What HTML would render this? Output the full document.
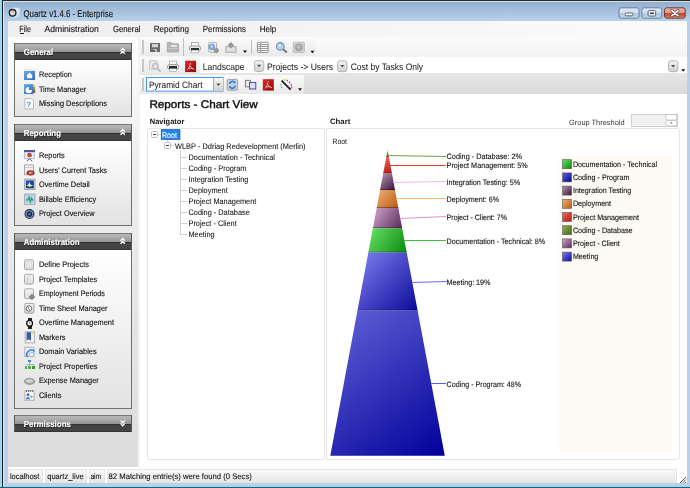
<!DOCTYPE html><html><head><meta charset="utf-8"><style>html,body{margin:0;padding:0;background:#fff;overflow:hidden}svg{display:block;will-change:transform}text{font-family:"Liberation Sans",sans-serif;text-rendering:geometricPrecision}</style></head><body>
<svg width="690" height="488" viewBox="0 0 690 488" shape-rendering="crispEdges">
<defs>
<linearGradient id="gTitle" x1="0" y1="0" x2="0" y2="1"><stop offset="0" stop-color="#93b0d0"/><stop offset="1" stop-color="#b9d2ea"/></linearGradient>
<linearGradient id="gSide" x1="0" y1="0" x2="0" y2="1"><stop offset="0" stop-color="#fdfdfd"/><stop offset="0.25" stop-color="#f0f0f0"/><stop offset="1" stop-color="#dcdcdc"/></linearGradient>
<linearGradient id="gBody" x1="0" y1="0" x2="0" y2="1"><stop offset="0" stop-color="#ffffff"/><stop offset="1" stop-color="#e2e2e2"/></linearGradient>
<linearGradient id="gHdrTop" x1="0" y1="0" x2="0" y2="1"><stop offset="0" stop-color="#b8b8b8"/><stop offset="0.35" stop-color="#b2b2b2"/><stop offset="1" stop-color="#949494"/></linearGradient>
<linearGradient id="gTS" x1="0" y1="0" x2="0" y2="1"><stop offset="0" stop-color="#fafafa"/><stop offset="1" stop-color="#e9e9e9"/></linearGradient>
<linearGradient id="gStat" x1="0" y1="0" x2="0" y2="1"><stop offset="0" stop-color="#fbfbfb"/><stop offset="1" stop-color="#e6e6e6"/></linearGradient>
<linearGradient id="gBtn" x1="0" y1="0" x2="0" y2="1"><stop offset="0" stop-color="#f4f4f4"/><stop offset="1" stop-color="#d0d0d0"/></linearGradient>
</defs>
<rect x="0" y="0" width="690" height="488" fill="#b9d1ea" />
<rect x="0" y="0" width="2" height="488" fill="#99d9f5" />
<rect x="2" y="0" width="1" height="488" fill="#1b1b1b" />
<rect x="2" y="0" width="688" height="1" fill="#2b2b26" />
<rect x="3" y="1" width="687" height="1" fill="#d6e0ea" />
<rect x="3" y="2" width="687" height="19" fill="url(#gTitle)" />
<rect x="3" y="2" width="1" height="486" fill="#dbe7f3" />
<rect x="0" y="487" width="690" height="1" fill="#0e6b75" />
<rect x="3" y="486" width="687" height="1" fill="#9fd5ee" />
<defs><linearGradient id="gDoc" x1="0" y1="0" x2="1" y2="1"><stop offset="0" stop-color="#ffffff"/><stop offset="1" stop-color="#b8cce6"/></linearGradient></defs>
<path d="M12 7.8 h6.4 l1.8 1.8 v8.6 h-8.2z" fill="url(#gDoc)" stroke="#a8bcd8" stroke-width="0.5" shape-rendering="geometricPrecision"/>
<circle cx="12.6" cy="12.8" r="3.3" fill="#dcdcdc" stroke="#1e1e1e" stroke-width="1.3" shape-rendering="geometricPrecision"/>
<path d="M12.6 12.8 L13.6 11.2" stroke="#777" stroke-width="0.7" shape-rendering="geometricPrecision"/>
<text x="23.5" y="17.1" font-size="9.8" fill="#141414" stroke="#141414" stroke-width="0.12" textLength="89.5" lengthAdjust="spacingAndGlyphs" >Quartz v1.4.6 - Enterprise</text>
<defs>
<linearGradient id="gCapB" x1="0" y1="0" x2="0" y2="1"><stop offset="0" stop-color="#dce8f4"/><stop offset="0.45" stop-color="#cfdff0"/><stop offset="0.5" stop-color="#b2c9e2"/><stop offset="0.85" stop-color="#b8cfe6"/><stop offset="1" stop-color="#d4e4f2"/></linearGradient>
<linearGradient id="gCapR" x1="0" y1="0" x2="0" y2="1"><stop offset="0" stop-color="#eab4a6"/><stop offset="0.45" stop-color="#e29c8a"/><stop offset="0.5" stop-color="#c8482c"/><stop offset="0.8" stop-color="#cc5a40"/><stop offset="1" stop-color="#e8a08c"/></linearGradient>
</defs>
<rect x="619.0" y="7.8" width="20.100000000000023" height="10.4" rx="2.2" fill="url(#gCapB)" stroke="#6d7d94" stroke-width="1" shape-rendering="geometricPrecision"/>
<rect x="625.15" y="13" width="7.8" height="2.8" rx="1.2" fill="#fff" stroke="#4a5468" stroke-width="0.9" shape-rendering="geometricPrecision"/>
<rect x="641.9" y="7.8" width="20.0" height="10.4" rx="2.2" fill="url(#gCapB)" stroke="#6d7d94" stroke-width="1" shape-rendering="geometricPrecision"/>
<rect x="648.1" y="10.6" width="7.6" height="5.4" rx="1" fill="#fff" stroke="#4a5468" stroke-width="0.9" shape-rendering="geometricPrecision"/>
<rect x="649.6999999999999" y="12.4" width="4.4" height="1.8" fill="#3a5078" shape-rendering="geometricPrecision"/>
<rect x="664.6" y="7.8" width="20.600000000000023" height="10.4" rx="2.2" fill="url(#gCapR)" stroke="#6a3a3a" stroke-width="1" shape-rendering="geometricPrecision"/>
<path d="M671.8000000000001 10.7 L678.0000000000001 15.7 M678.0000000000001 10.7 L671.8000000000001 15.7" stroke="#4a4a50" stroke-width="3" stroke-linecap="round" shape-rendering="geometricPrecision"/>
<path d="M671.8000000000001 10.7 L678.0000000000001 15.7 M678.0000000000001 10.7 L671.8000000000001 15.7" stroke="#fff" stroke-width="1.6" stroke-linecap="round" shape-rendering="geometricPrecision"/>
<rect x="8" y="21" width="679" height="462" fill="#ffffff" />
<defs><linearGradient id="gMenu" x1="0" y1="0" x2="1" y2="0"><stop offset="0" stop-color="#efefef"/><stop offset="1" stop-color="#fbfbfb"/></linearGradient></defs>
<rect x="8" y="21" width="679" height="16" fill="url(#gMenu)" />
<text x="19.3" y="32.2" font-size="8.9" fill="#141414" stroke="#141414" stroke-width="0.12" textLength="11.6" lengthAdjust="spacingAndGlyphs" >File</text>
<text x="44.5" y="32.2" font-size="8.9" fill="#141414" stroke="#141414" stroke-width="0.12" textLength="54.4" lengthAdjust="spacingAndGlyphs" >Administration</text>
<text x="112.9" y="32.2" font-size="8.9" fill="#141414" stroke="#141414" stroke-width="0.12" textLength="27.6" lengthAdjust="spacingAndGlyphs" >General</text>
<text x="153.7" y="32.2" font-size="8.9" fill="#141414" stroke="#141414" stroke-width="0.12" textLength="35.3" lengthAdjust="spacingAndGlyphs" >Reporting</text>
<text x="202.8" y="32.2" font-size="8.9" fill="#141414" stroke="#141414" stroke-width="0.12" textLength="43.2" lengthAdjust="spacingAndGlyphs" >Permissions</text>
<text x="259.8" y="32.2" font-size="8.9" fill="#141414" stroke="#141414" stroke-width="0.12" textLength="16.5" lengthAdjust="spacingAndGlyphs" >Help</text>
<rect x="19.5" y="33" width="4" height="1" fill="#1a1a1a" />
<rect x="8" y="37" width="130" height="430" fill="url(#gSide)" />
<rect x="138" y="37" width="2" height="430" fill="#f4f4f4" />
<defs>
<linearGradient id="icBlue" x1="0" y1="0" x2="1" y2="1"><stop offset="0" stop-color="#6aa8e6"/><stop offset="1" stop-color="#2d6cc0"/></linearGradient>
<linearGradient id="icGray" x1="0" y1="0" x2="0" y2="1"><stop offset="0" stop-color="#f4f4f4"/><stop offset="1" stop-color="#dadada"/></linearGradient>
<linearGradient id="icNavy" x1="0" y1="0" x2="1" y2="1"><stop offset="0" stop-color="#2a64b8"/><stop offset="1" stop-color="#0a2a6a"/></linearGradient>
<linearGradient id="icRed" x1="0" y1="0" x2="1" y2="1"><stop offset="0" stop-color="#e02a2a"/><stop offset="1" stop-color="#8c0606"/></linearGradient>
</defs>
<rect x="14" y="43" width="118" height="8.6" fill="url(#gHdrTop)" />
<rect x="14" y="51.6" width="118" height="8.8" fill="#444444" />
<rect x="14" y="51.5" width="118" height="1" fill="#303030" />
<rect x="14" y="59.4" width="118" height="1" fill="#343434" />
<rect x="14" y="43" width="118" height="1" fill="#787878" />
<rect x="14" y="43" width="1" height="17.4" fill="#5a5a5a" />
<rect x="131" y="43" width="1" height="17.4" fill="#5a5a5a" />
<text x="24.4" y="55.8" font-size="8.5" font-weight="bold" fill="#000000" textLength="29.4" lengthAdjust="spacingAndGlyphs" opacity="0.55">General</text>
<text x="23.8" y="55.2" font-size="8.5" font-weight="bold" fill="#ffffff" stroke="#ffffff" stroke-width="0.15" textLength="29.4" lengthAdjust="spacingAndGlyphs" >General</text>
<path d="M120.5 50.699999999999996 L122.7 48.4 L124.9 50.699999999999996 M120.5 53.699999999999996 L122.7 51.4 L124.9 53.699999999999996" stroke="#fff" stroke-width="1.3" fill="none" shape-rendering="geometricPrecision"/>
<rect x="14" y="60.4" width="118" height="56.6" fill="url(#gBody)" />
<rect x="14" y="60.4" width="1" height="56.6" fill="#707070" />
<rect x="131" y="60.4" width="1" height="56.6" fill="#707070" />
<rect x="14" y="116.0" width="118" height="1" fill="#707070" />
<text x="38.9" y="77.2" font-size="8.0" fill="#111" stroke="#111" stroke-width="0.12" textLength="33" lengthAdjust="spacingAndGlyphs" >Reception</text>
<rect x="24.5" y="69.60000000000001" width="10" height="2" fill="#eef1f5" stroke="#d8dde5" stroke-width="0.5" shape-rendering="geometricPrecision"/>
<rect x="24" y="71.00000000000001" width="11" height="9" fill="url(#icBlue)" shape-rendering="geometricPrecision"/>
<path d="M27 78.2 v-3.2 l2.6 -2.4 l2.6 2.4 v3.2 z" fill="#fff" shape-rendering="geometricPrecision"/>
<text x="38.9" y="91.72" font-size="8.0" fill="#111" stroke="#111" stroke-width="0.12" textLength="47.3" lengthAdjust="spacingAndGlyphs" >Time Manager</text>
<rect x="24" y="84.12" width="9.3" height="10" fill="url(#icBlue)" shape-rendering="geometricPrecision"/>
<path d="M28.8 90.12 L28.8 86.92 A3.2 3.2 0 1 0 32 90.12z" fill="#fff" shape-rendering="geometricPrecision"/>
<rect x="33.3" y="84.52000000000001" width="1.7" height="2.8" fill="#e8d040" />
<rect x="33.3" y="87.32000000000001" width="1.7" height="2.8" fill="#74b048" />
<rect x="33.3" y="90.12" width="1.7" height="2.6" fill="#e02828" />
<text x="38.9" y="106.24" font-size="8.0" fill="#111" stroke="#111" stroke-width="0.12" textLength="68" lengthAdjust="spacingAndGlyphs" >Missing Descriptions</text>
<path d="M24.9 98.54000000000002 h6.5 l2 2 v8.3 h-8.5z" fill="#fff" stroke="#b0b0b0" stroke-width="0.9" shape-rendering="geometricPrecision"/>
<text x="26.6" y="106.94000000000001" font-size="7.5" font-weight="bold" fill="#3d7fd0">?</text>
<rect x="14" y="124" width="118" height="8.6" fill="url(#gHdrTop)" />
<rect x="14" y="132.6" width="118" height="8.8" fill="#444444" />
<rect x="14" y="132.5" width="118" height="1" fill="#303030" />
<rect x="14" y="140.4" width="118" height="1" fill="#343434" />
<rect x="14" y="124" width="118" height="1" fill="#787878" />
<rect x="14" y="124" width="1" height="17.4" fill="#5a5a5a" />
<rect x="131" y="124" width="1" height="17.4" fill="#5a5a5a" />
<text x="24.4" y="136.8" font-size="8.5" font-weight="bold" fill="#000000" textLength="37.2" lengthAdjust="spacingAndGlyphs" opacity="0.55">Reporting</text>
<text x="23.8" y="136.2" font-size="8.5" font-weight="bold" fill="#ffffff" stroke="#ffffff" stroke-width="0.15" textLength="37.2" lengthAdjust="spacingAndGlyphs" >Reporting</text>
<path d="M120.5 131.70000000000002 L122.7 129.4 L124.9 131.70000000000002 M120.5 134.70000000000002 L122.7 132.4 L124.9 134.70000000000002" stroke="#fff" stroke-width="1.3" fill="none" shape-rendering="geometricPrecision"/>
<rect x="14" y="141.4" width="118" height="84.6" fill="url(#gBody)" />
<rect x="14" y="141.4" width="1" height="84.6" fill="#707070" />
<rect x="131" y="141.4" width="1" height="84.6" fill="#707070" />
<rect x="14" y="225.0" width="118" height="1" fill="#707070" />
<text x="38.9" y="158.0" font-size="8.0" fill="#111" stroke="#111" stroke-width="0.12" textLength="25.84" lengthAdjust="spacingAndGlyphs" >Reports</text>
<rect x="24.6" y="152.0" width="9.6" height="6.6" fill="#ececec" stroke="#a8a8a8" stroke-width="0.7" shape-rendering="geometricPrecision"/>
<rect x="24" y="149.9" width="11" height="2.2" fill="#4a58a8" />
<circle cx="29.5" cy="155.0" r="2.3" fill="#e03838" shape-rendering="geometricPrecision"/>
<path d="M29.5 155.0 h2.3 a2.3 2.3 0 0 1 -1 1.9z" fill="#3a9a40" shape-rendering="geometricPrecision"/>
<path d="M27 161.20000000000002 L29.5 158.70000000000002 L32 161.20000000000002" stroke="#3848b8" stroke-width="1" fill="none" shape-rendering="geometricPrecision"/>
<text x="38.9" y="172.52" font-size="8.0" fill="#111" stroke="#111" stroke-width="0.12" textLength="68.12" lengthAdjust="spacingAndGlyphs" >Users' Current Tasks</text>
<rect x="24.5" y="164.92000000000002" width="9" height="9.8" fill="#f2f2f2" stroke="#a0a0a0" stroke-width="0.9" shape-rendering="geometricPrecision"/>
<rect x="25" y="166.92000000000002" width="8" height="0.7" fill="#c8c8c8" />
<rect x="26.6" y="167.52" width="0.7" height="6.5" fill="#c8c8c8" />
<ellipse cx="30.6" cy="172.82000000000002" rx="4.1" ry="2.6" fill="#c82020" shape-rendering="geometricPrecision"/>
<ellipse cx="30.8" cy="172.82000000000002" rx="2.3" ry="1.4" fill="#50a0d0" shape-rendering="geometricPrecision"/>
<ellipse cx="30" cy="173.02" rx="1" ry="0.9" fill="#e0c030" shape-rendering="geometricPrecision"/>
<text x="38.9" y="187.04" font-size="8.0" fill="#111" stroke="#111" stroke-width="0.12" textLength="50.85" lengthAdjust="spacingAndGlyphs" >Overtime Detail</text>
<rect x="24.7" y="179.14" width="10.3" height="10.3" fill="#e6e9ee" stroke="#9a9a9a" stroke-width="0.9" shape-rendering="geometricPrecision"/>
<rect x="25.8" y="180.34" width="8" height="8" fill="url(#icNavy)" shape-rendering="geometricPrecision"/>
<path d="M26.2 185.84 C27.8 185.64 28.6 184.44 29.4 182.04 C30 184.44 31 185.44 33.2 185.44 L31.8 186.44 C30.5 186.44 30 185.94 29.6 187.24 C29 186.24 28 186.64 26.2 185.84z" fill="#f0f0b0" shape-rendering="geometricPrecision"/>
<text x="38.9" y="201.56" font-size="8.0" fill="#111" stroke="#111" stroke-width="0.12" textLength="57.29" lengthAdjust="spacingAndGlyphs" >Billable Efficiency</text>
<rect x="24.7" y="194.06" width="10.3" height="10.3" fill="#dde4ec" stroke="#9a9a9a" stroke-width="0.9" shape-rendering="geometricPrecision"/>
<rect x="25.8" y="195.16" width="8" height="8" fill="#a8d0f4" shape-rendering="geometricPrecision"/>
<path d="M25.8 199.96 L28 199.96 L29.2 196.96 L30.4 201.96 L31.6 198.46 L32.4 199.96 L33.8 199.96" stroke="#18a050" stroke-width="1.1" fill="none" shape-rendering="geometricPrecision"/>
<text x="38.9" y="216.08" font-size="8.0" fill="#111" stroke="#111" stroke-width="0.12" textLength="55.77" lengthAdjust="spacingAndGlyphs" >Project Overview</text>
<circle cx="29.5" cy="214.07999999999998" r="5" fill="#1e2a50" shape-rendering="geometricPrecision"/>
<circle cx="29.5" cy="214.07999999999998" r="3.4" fill="none" stroke="#8a98c8" stroke-width="1.1" shape-rendering="geometricPrecision"/>
<circle cx="29.5" cy="214.07999999999998" r="1.4" fill="#5a6aa0" shape-rendering="geometricPrecision"/>
<rect x="14" y="233" width="118" height="8.6" fill="url(#gHdrTop)" />
<rect x="14" y="241.6" width="118" height="8.8" fill="#444444" />
<rect x="14" y="241.5" width="118" height="1" fill="#303030" />
<rect x="14" y="249.4" width="118" height="1" fill="#343434" />
<rect x="14" y="233" width="118" height="1" fill="#787878" />
<rect x="14" y="233" width="1" height="17.4" fill="#5a5a5a" />
<rect x="131" y="233" width="1" height="17.4" fill="#5a5a5a" />
<text x="24.4" y="245.8" font-size="8.5" font-weight="bold" fill="#000000" textLength="55.74" lengthAdjust="spacingAndGlyphs" opacity="0.55">Administration</text>
<text x="23.8" y="245.2" font-size="8.5" font-weight="bold" fill="#ffffff" stroke="#ffffff" stroke-width="0.15" textLength="55.74" lengthAdjust="spacingAndGlyphs" >Administration</text>
<path d="M120.5 240.70000000000002 L122.7 238.4 L124.9 240.70000000000002 M120.5 243.70000000000002 L122.7 241.4 L124.9 243.70000000000002" stroke="#fff" stroke-width="1.3" fill="none" shape-rendering="geometricPrecision"/>
<rect x="14" y="250.4" width="118" height="158.6" fill="url(#gBody)" />
<rect x="14" y="250.4" width="1" height="158.6" fill="#707070" />
<rect x="131" y="250.4" width="1" height="158.6" fill="#707070" />
<rect x="14" y="408.0" width="118" height="1" fill="#707070" />
<text x="38.9" y="267.2" font-size="8.0" fill="#111" stroke="#111" stroke-width="0.12" textLength="50" lengthAdjust="spacingAndGlyphs" >Define Projects</text>
<rect x="24.5" y="259.79999999999995" width="9" height="9.8" rx="1.6" fill="url(#icGray)" stroke="#a9a9a9" stroke-width="1" shape-rendering="geometricPrecision"/>
<rect x="26.5" y="261.59999999999997" width="5" height="6" fill="#e9e9e9" stroke="#d0d0d0" stroke-width="0.5" shape-rendering="geometricPrecision"/>
<text x="38.9" y="281.72" font-size="8.0" fill="#111" stroke="#111" stroke-width="0.12" textLength="58.4" lengthAdjust="spacingAndGlyphs" >Project Templates</text>
<rect x="24.5" y="274.31999999999994" width="9" height="9.8" rx="1.6" fill="url(#icGray)" stroke="#a9a9a9" stroke-width="1" shape-rendering="geometricPrecision"/>
<path d="M27.5 282.61999999999995 v-6 h3 M27.5 279.11999999999995 h2" stroke="#cfcfcf" stroke-width="0.9" fill="none" shape-rendering="geometricPrecision"/>
<text x="38.9" y="296.24" font-size="8.0" fill="#111" stroke="#111" stroke-width="0.12" textLength="66" lengthAdjust="spacingAndGlyphs" >Employment Periods</text>
<rect x="24.5" y="288.84" width="9" height="9.8" rx="1.6" fill="url(#icGray)" stroke="#a9a9a9" stroke-width="1" shape-rendering="geometricPrecision"/>
<path d="M32 294.14 l2.8 2.8 l-2.8 2.8 l-2.8 -2.8z" fill="#8a8a8a" stroke="#666" stroke-width="0.6" shape-rendering="geometricPrecision"/>
<text x="38.9" y="310.76" font-size="8.0" fill="#111" stroke="#111" stroke-width="0.12" textLength="68.64" lengthAdjust="spacingAndGlyphs" >Time Sheet Manager</text>
<rect x="24.9" y="303.35999999999996" width="9" height="9.8" rx="1.2" fill="url(#icGray)" stroke="#a0a0a0" stroke-width="1" shape-rendering="geometricPrecision"/>
<circle cx="29" cy="308.46" r="2.7" fill="#fff" stroke="#555" stroke-width="0.9" shape-rendering="geometricPrecision"/>
<path d="M28.6 307.05999999999995 v1.6 l1.3 1" stroke="#444" stroke-width="0.7" fill="none" shape-rendering="geometricPrecision"/>
<text x="38.9" y="325.28" font-size="8.0" fill="#111" stroke="#111" stroke-width="0.12" textLength="75.06" lengthAdjust="spacingAndGlyphs" >Overtime Management</text>
<rect x="27.6" y="317.67999999999995" width="4" height="11" fill="#222" />
<circle cx="29.6" cy="323.17999999999995" r="2.9" fill="#fff" stroke="#111" stroke-width="1.3" shape-rendering="geometricPrecision"/>
<path d="M29.6 321.67999999999995 v1.5 h1.1" stroke="#333" stroke-width="0.6" fill="none" shape-rendering="geometricPrecision"/>
<text x="38.9" y="339.8" font-size="8.0" fill="#111" stroke="#111" stroke-width="0.12" textLength="26.65" lengthAdjust="spacingAndGlyphs" >Markers</text>
<rect x="25.2" y="331.8999999999999" width="9.4" height="11" fill="#f2f2f2" stroke="#a8a8a8" stroke-width="0.9" shape-rendering="geometricPrecision"/>
<path d="M26.6 332.19999999999993 h4.4 v8.6 l-2.2 -1.6 l-2.2 1.6z" fill="#3a5aa0" shape-rendering="geometricPrecision"/>
<rect x="27.6" y="332.5999999999999" width="0.8" height="7" fill="#8aa0d0" />
<circle cx="33.6" cy="333.79999999999995" r="1.3" fill="#f0e060" shape-rendering="geometricPrecision"/>
<text x="38.9" y="354.32" font-size="8.0" fill="#111" stroke="#111" stroke-width="0.12" textLength="57.7" lengthAdjust="spacingAndGlyphs" >Domain Variables</text>
<rect x="24.9" y="347.21999999999997" width="9" height="9.4" fill="#f0f0f0" stroke="#a8a8a8" stroke-width="0.9" shape-rendering="geometricPrecision"/>
<path d="M27.5 357.02 A4.6 4.6 0 0 1 34.6 351.32" stroke="#4a8ad4" stroke-width="1.8" fill="none" shape-rendering="geometricPrecision"/>
<path d="M29.5 357.02 A2.8 2.8 0 0 1 34.6 353.91999999999996" stroke="#9ac4ee" stroke-width="1.2" fill="none" shape-rendering="geometricPrecision"/>
<text x="38.9" y="368.84" font-size="8.0" fill="#111" stroke="#111" stroke-width="0.12" textLength="58.65" lengthAdjust="spacingAndGlyphs" >Project Properties</text>
<rect x="28.4" y="359.84" width="2.6" height="2.6" fill="#4a84d4" />
<rect x="29.3" y="362.43999999999994" width="0.8" height="1.8" fill="#b0b0b0" />
<rect x="25.6" y="364.23999999999995" width="8.2" height="0.8" fill="#b0b0b0" />
<rect x="25.6" y="364.23999999999995" width="0.8" height="1.8" fill="#b0b0b0" />
<rect x="29.3" y="364.23999999999995" width="0.8" height="1.8" fill="#b0b0b0" />
<rect x="33" y="364.23999999999995" width="0.8" height="1.8" fill="#b0b0b0" />
<rect x="24.6" y="366.23999999999995" width="2.8" height="2.8" fill="#4cb84c" />
<rect x="28.3" y="366.23999999999995" width="2.8" height="2.8" fill="#4cb84c" />
<rect x="32" y="366.23999999999995" width="2.8" height="2.8" fill="#3a9a3a" />
<text x="38.9" y="383.36" font-size="8.0" fill="#111" stroke="#111" stroke-width="0.12" textLength="59.89" lengthAdjust="spacingAndGlyphs" >Expense Manager</text>
<ellipse cx="29.6" cy="381.36" rx="5.4" ry="3.1" fill="#a4a4a4" stroke="#8a8a8a" stroke-width="0.6" shape-rendering="geometricPrecision"/>
<ellipse cx="29.4" cy="380.96" rx="3.6" ry="1.7" fill="#d4d4d4" shape-rendering="geometricPrecision"/>
<text x="38.9" y="397.88" font-size="8.0" fill="#111" stroke="#111" stroke-width="0.12" textLength="22.56" lengthAdjust="spacingAndGlyphs" >Clients</text>
<rect x="24.9" y="390.88" width="9.2" height="9.4" fill="#f4f4f4" stroke="#a8a8a8" stroke-width="0.9" shape-rendering="geometricPrecision"/>
<rect x="25.6" y="390.08" width="1.1" height="1.6" fill="#777" />
<rect x="27.8" y="390.08" width="1.1" height="1.6" fill="#777" />
<rect x="30.0" y="390.08" width="1.1" height="1.6" fill="#777" />
<rect x="32.2" y="390.08" width="1.1" height="1.6" fill="#777" />
<circle cx="28" cy="394.78" r="1.5" fill="#3a70d0" shape-rendering="geometricPrecision"/>
<path d="M25.8 399.28 q2.2 -4.4 4.4 0z" fill="#3a70d0" shape-rendering="geometricPrecision"/>
<path d="M30.6 395.28 l2.6 1.4 l-2.6 1.4z" fill="#5ab05a" shape-rendering="geometricPrecision"/>
<rect x="14" y="415" width="118" height="8.6" fill="url(#gHdrTop)" />
<rect x="14" y="423.6" width="118" height="8.8" fill="#444444" />
<rect x="14" y="423.5" width="118" height="1" fill="#303030" />
<rect x="14" y="431.4" width="118" height="1" fill="#343434" />
<rect x="14" y="415" width="118" height="1" fill="#787878" />
<rect x="14" y="415" width="1" height="17.4" fill="#5a5a5a" />
<rect x="131" y="415" width="1" height="17.4" fill="#5a5a5a" />
<text x="24.4" y="427.8" font-size="8.5" font-weight="bold" fill="#000000" textLength="47.1" lengthAdjust="spacingAndGlyphs" opacity="0.55">Permissions</text>
<text x="23.8" y="427.2" font-size="8.5" font-weight="bold" fill="#ffffff" stroke="#ffffff" stroke-width="0.15" textLength="47.1" lengthAdjust="spacingAndGlyphs" >Permissions</text>
<path d="M120.5 420.4 L122.7 422.7 L124.9 420.4 M120.5 423.4 L122.7 425.7 L124.9 423.4" stroke="#fff" stroke-width="1.3" fill="none" shape-rendering="geometricPrecision"/>
<defs><linearGradient id="gBand1" x1="0" y1="0" x2="0" y2="1"><stop offset="0" stop-color="#fbfbfb"/><stop offset="1" stop-color="#f3f3f3"/></linearGradient><linearGradient id="gBand3" x1="0" y1="0" x2="0" y2="1"><stop offset="0" stop-color="#e6e6e6"/><stop offset="1" stop-color="#dadada"/></linearGradient></defs>
<rect x="140" y="37" width="547" height="57" fill="#fbfbfb" />
<rect x="140" y="37" width="547" height="20" fill="url(#gBand1)" />
<rect x="140" y="57" width="547" height="16" fill="#ffffff" />
<rect x="140" y="73" width="547" height="20.5" fill="url(#gBand3)" />
<rect x="140" y="38" width="176" height="18" fill="url(#gTS)" />
<rect x="140" y="57" width="547" height="16" fill="#ffffff" />
<rect x="140" y="57" width="60" height="16.5" fill="url(#gTS)" />
<rect x="140" y="75" width="164" height="18.5" fill="url(#gTS)" />
<rect x="142" y="40" width="2" height="14" fill="#c8c8c8" />
<rect x="142" y="59" width="2" height="13" fill="#c8c8c8" />
<rect x="142" y="78" width="2" height="13" fill="#c8c8c8" />
<rect x="183" y="38" width="1" height="18" fill="#c0c0c0" />
<rect x="251" y="40" width="1" height="14" fill="#c0c0c0" />
<rect x="150" y="42.7" width="9.8" height="9.4" fill="#6a6a6a" />
<rect x="151.5" y="43.900000000000006" width="6.6" height="3.4" fill="#d4d4d4" />
<rect x="151.5" y="47.300000000000004" width="6.6" height="0.9" fill="#8a8a8a" />
<rect x="152.5" y="49.300000000000004" width="4.6" height="2.8" fill="#b8b8b8" />
<rect x="153.3" y="49.7" width="1.3" height="2.4" fill="#5e5e5e" />
<path d="M167.2 42.3 h4 l1.2 1.4 h5.6 q0.6 0 0.6 0.6 v7.8 h-11.4z" fill="#b4b4b4" stroke="#9c9c9c" stroke-width="0.6" shape-rendering="geometricPrecision"/>
<rect x="170.5" y="44.6" width="6.6" height="2" fill="#e6e6e6" />
<rect x="168.2" y="48.2" width="9.6" height="0.8" fill="#c8c8c8" />
<rect x="191.6" y="42.5" width="6.8" height="3.8" fill="#fafafa" stroke="#9a9a9a" stroke-width="0.7" shape-rendering="geometricPrecision"/>
<rect x="189.4" y="46.0" width="11.2" height="4.6" rx="2" fill="#e8e8e8" stroke="#8a8a8a" stroke-width="0.8" shape-rendering="geometricPrecision"/>
<rect x="191.2" y="47.800000000000004" width="7.6" height="2.2" fill="#2a2a2a" />
<rect x="191.6" y="50.2" width="6.8" height="2.6" fill="#fff" stroke="#9a9a9a" stroke-width="0.6" shape-rendering="geometricPrecision"/>
<rect x="208.6" y="42.6" width="8" height="9.6" rx="1" fill="#f0f0f0" stroke="#a0a0a0" stroke-width="0.8" shape-rendering="geometricPrecision"/>
<circle cx="211.9" cy="47" r="2.8" fill="#78b0ec" stroke="#5a7aa8" stroke-width="0.6" shape-rendering="geometricPrecision"/>
<circle cx="211.6" cy="46.6" r="1" fill="#e8f2fc" shape-rendering="geometricPrecision"/>
<circle cx="216.3" cy="50.6" r="2.2" fill="#9a9a9a" stroke="#777" stroke-width="0.5" shape-rendering="geometricPrecision"/>
<path d="M225.6 46.5 h10.6 v6 h-10.6z" fill="#d0d0d0" stroke="#a8a8a8" stroke-width="0.7" shape-rendering="geometricPrecision"/>
<path d="M227 47.5 h7.8 v3.6 h-7.8z" fill="#e0e0e0" shape-rendering="geometricPrecision"/>
<path d="M230.9 42.3 l3 2.9 l-3 2.9 l-3 -2.9z" fill="#9a9a9a" stroke="#888" stroke-width="0.5" shape-rendering="geometricPrecision"/>
<path d="M243 50.5 h4 l-2 2.5z" fill="#111" shape-rendering="geometricPrecision"/>
<rect x="257.4" y="42.3" width="10.8" height="10.2" rx="0.8" fill="#f8f8f8" stroke="#8a8a8a" stroke-width="0.9" shape-rendering="geometricPrecision"/>
<rect x="257.8" y="44.3" width="10" height="0.8" fill="#9a9a9a" />
<rect x="257.8" y="46.3" width="10" height="0.8" fill="#9a9a9a" />
<rect x="257.8" y="48.3" width="10" height="0.8" fill="#9a9a9a" />
<rect x="257.8" y="50.3" width="10" height="0.8" fill="#9a9a9a" />
<rect x="259.9" y="42.6" width="0.8" height="9.6" fill="#9a9a9a" />
<rect x="265.6" y="42.6" width="0.8" height="9.6" fill="#9a9a9a" />
<path d="M283 49 l3.2 3" stroke="#777" stroke-width="2" stroke-linecap="round" shape-rendering="geometricPrecision"/>
<circle cx="280.3" cy="46.4" r="3.8" fill="#a8d0f8" stroke="#7a8ea8" stroke-width="1.1" shape-rendering="geometricPrecision"/>
<circle cx="279.5" cy="45.6" r="1.3" fill="#e8f4ff" shape-rendering="geometricPrecision"/>
<rect x="293.2" y="42.2" width="11.2" height="10.4" rx="1" fill="#d0d0d0" stroke="#b4b4b4" stroke-width="0.7" shape-rendering="geometricPrecision"/>
<circle cx="298.8" cy="47.4" r="3.6" fill="#a8a8a8" stroke="#9a9a9a" stroke-width="0.6" shape-rendering="geometricPrecision"/>
<circle cx="298.4" cy="46.8" r="1.8" fill="#c0c0c0" shape-rendering="geometricPrecision"/>
<path d="M310.4 50.8 h4 l-2 2.5z" fill="#111" shape-rendering="geometricPrecision"/>
<rect x="149.4" y="60.9" width="7.6" height="8.2" fill="#e8e8e8" stroke="#b8b8b8" stroke-width="0.7" shape-rendering="geometricPrecision"/>
<path d="M157.8 68.8 l2.4 2.4" stroke="#b0b0b0" stroke-width="1.5" stroke-linecap="round" shape-rendering="geometricPrecision"/>
<circle cx="155.4" cy="66.4" r="2.9" fill="#e4e4e4" stroke="#a8a8a8" stroke-width="1" shape-rendering="geometricPrecision"/>
<rect x="169.7" y="61.099999999999994" width="6.8" height="3.8" fill="#fafafa" stroke="#9a9a9a" stroke-width="0.7" shape-rendering="geometricPrecision"/>
<rect x="167.5" y="64.6" width="11.2" height="4.6" rx="2" fill="#e8e8e8" stroke="#8a8a8a" stroke-width="0.8" shape-rendering="geometricPrecision"/>
<rect x="169.29999999999998" y="66.39999999999999" width="7.6" height="2.2" fill="#2a2a2a" />
<rect x="169.7" y="68.8" width="6.8" height="2.6" fill="#fff" stroke="#9a9a9a" stroke-width="0.6" shape-rendering="geometricPrecision"/>
<rect x="185.1" y="60.7" width="11" height="11.4" fill="url(#icRed)" shape-rendering="geometricPrecision"/>
<path d="M187.4 69.9 C189.1 68.10000000000001 190.1 65.2 190.4 62.900000000000006 M190.1 65.9 C191.1 67.9 192.7 68.9 194.5 69.3 M188.1 68.3 h4.6" stroke="#f4d0d0" stroke-width="0.8" fill="none" shape-rendering="geometricPrecision"/>
<text x="202.7" y="69.8" font-size="9.4" fill="#222" stroke="#222" stroke-width="0.04" textLength="41.7" lengthAdjust="spacingAndGlyphs" >Landscape</text>
<rect x="254.4" y="60.6" width="9.4" height="10.9" rx="2.4" fill="url(#gBtn)" stroke="#a4a4a4" stroke-width="0.8" shape-rendering="geometricPrecision"/>
<path d="M256.90000000000003 64.8 h4.4 l-2.2 2.4z" fill="#555" shape-rendering="geometricPrecision"/>
<text x="267" y="69.8" font-size="9.4" fill="#222" stroke="#222" stroke-width="0.04" textLength="66.1" lengthAdjust="spacingAndGlyphs" >Projects -&gt; Users</text>
<rect x="337.59999999999997" y="60.8" width="9.4" height="10.9" rx="2.4" fill="url(#gBtn)" stroke="#a4a4a4" stroke-width="0.8" shape-rendering="geometricPrecision"/>
<path d="M340.09999999999997 65.0 h4.4 l-2.2 2.4z" fill="#555" shape-rendering="geometricPrecision"/>
<text x="350.7" y="69.7" font-size="9.4" fill="#222" stroke="#222" stroke-width="0.04" textLength="72.4" lengthAdjust="spacingAndGlyphs" >Cost by Tasks Only</text>
<rect x="668.5" y="60.8" width="9.4" height="10.9" rx="2.4" fill="url(#gBtn)" stroke="#a4a4a4" stroke-width="0.8" shape-rendering="geometricPrecision"/>
<path d="M671.0 65.0 h4.4 l-2.2 2.4z" fill="#555" shape-rendering="geometricPrecision"/>
<path d="M681.2 69.2 h4 l-2 2.5z" fill="#111" shape-rendering="geometricPrecision"/>
<rect x="146.5" y="77.5" width="76.5" height="13.6" fill="#fff" stroke="#4a96e6" stroke-width="1" shape-rendering="geometricPrecision"/>
<rect x="213.6" y="78" width="9" height="13.1" fill="url(#gBtn)" />
<rect x="213.2" y="78" width="0.8" height="13.1" fill="#8ab0d8" />
<path d="M216.2 83.6 h4.4 l-2.2 2.4z" fill="#555" shape-rendering="geometricPrecision"/>
<text x="148.9" y="88.2" font-size="9.2" fill="#222" stroke="#222" stroke-width="0.04" textLength="53.6" lengthAdjust="spacingAndGlyphs" >Pyramid Chart</text>
<rect x="227.2" y="79.4" width="10.4" height="10.8" rx="1.2" fill="#c8d0da" stroke="#8a9098" stroke-width="0.8" shape-rendering="geometricPrecision"/>
<path d="M229.6 84 a2.9 2.9 0 0 1 5.4 -1.2 M235.2 85.6 a2.9 2.9 0 0 1 -5.4 1.2" stroke="#2a7ad8" stroke-width="1.5" fill="none" shape-rendering="geometricPrecision"/>
<path d="M234 81.2 l2 1.8 l-2.4 0.6z M230.8 88.4 l-2 -1.8 l2.4 -0.6z" fill="#2a7ad8" shape-rendering="geometricPrecision"/>
<rect x="245.4" y="80.3" width="5.2" height="6.6" fill="#e8e8e8" stroke="#6a6a6a" stroke-width="0.8" shape-rendering="geometricPrecision"/>
<rect x="249.6" y="82.4" width="6.2" height="6.6" fill="#dfe0f0" stroke="#3a3aa8" stroke-width="0.9" shape-rendering="geometricPrecision"/>
<rect x="262.8" y="79.2" width="11" height="11.4" fill="url(#icRed)" shape-rendering="geometricPrecision"/>
<path d="M265.1 88.4 C266.8 86.60000000000001 267.8 83.7 268.1 81.4 M267.8 84.4 C268.8 86.4 270.40000000000003 87.4 272.2 87.8 M265.8 86.8 h4.6" stroke="#f4d0d0" stroke-width="0.8" fill="none" shape-rendering="geometricPrecision"/>
<path d="M281.6 80.6 L290.6 89.6" stroke="#1a1a1a" stroke-width="1.7" shape-rendering="geometricPrecision"/>
<circle cx="284.6" cy="79.8" r="0.9" fill="#d8d020" shape-rendering="geometricPrecision"/>
<circle cx="287.2" cy="80.6" r="0.9" fill="#c040c0" shape-rendering="geometricPrecision"/>
<circle cx="289.6" cy="82.4" r="0.9" fill="#b050d0" shape-rendering="geometricPrecision"/>
<circle cx="291.4" cy="85" r="0.9" fill="#e050a0" shape-rendering="geometricPrecision"/>
<circle cx="291.6" cy="87.6" r="0.9" fill="#e04060" shape-rendering="geometricPrecision"/>
<circle cx="281" cy="84.6" r="0.9" fill="#70d040" shape-rendering="geometricPrecision"/>
<circle cx="281.6" cy="87.4" r="0.9" fill="#50c0e0" shape-rendering="geometricPrecision"/>
<path d="M298 88.2 h4 l-2 2.5z" fill="#111" shape-rendering="geometricPrecision"/>
<text x="149.4" y="107.6" font-size="11" fill="#111" stroke="#111" stroke-width="0.42" textLength="108.3" lengthAdjust="spacingAndGlyphs" >Reports - Chart View</text>
<text x="149.8" y="124" font-size="7.8" font-weight="bold" fill="#111" textLength="34.5" lengthAdjust="spacingAndGlyphs" >Navigator</text>
<text x="330" y="123.9" font-size="7.8" font-weight="bold" fill="#111" textLength="20.3" lengthAdjust="spacingAndGlyphs" >Chart</text>
<text x="569" y="125.1" font-size="7.6" fill="#333" textLength="55.6" lengthAdjust="spacingAndGlyphs" >Group Threshold</text>
<rect x="631.5" y="114.5" width="46" height="12" fill="#f2f2f2" stroke="#cfcfcf" stroke-width="1"/>
<rect x="665.5" y="114.5" width="11.5" height="5.5" rx="2.5" fill="#fff" stroke="#b5b5b5" stroke-width="0.7" shape-rendering="geometricPrecision"/>
<rect x="665.5" y="120.5" width="11.5" height="5.5" rx="2.5" fill="#fff" stroke="#b5b5b5" stroke-width="0.7" shape-rendering="geometricPrecision"/>
<path d="M670 122.5 h2.5 l-1.25 1.3z" fill="#333" shape-rendering="geometricPrecision"/>
<rect x="147.5" y="128.5" width="177" height="331" rx="1.5" fill="#fff" stroke="#e6e6e6" stroke-width="1" shape-rendering="geometricPrecision"/>
<rect x="326.5" y="128.5" width="353" height="331" rx="1.5" fill="#fff" stroke="#e6e6e6" stroke-width="1" shape-rendering="geometricPrecision"/>
<rect x="151.5" y="131.5" width="6" height="6" rx="1" fill="#fff" stroke="#bdbdbd" stroke-width="1" shape-rendering="geometricPrecision"/>
<rect x="153" y="134" width="3" height="1" fill="#444" />
<rect x="158" y="134" width="2.5" height="1" fill="#e0e0e0" />
<rect x="161.3" y="129.7" width="18.6" height="9.6" fill="#2488ee" stroke="#0d4ea8" stroke-width="0.8" shape-rendering="geometricPrecision"/>
<text x="162" y="138" font-size="8.2" fill="#fff" stroke="#fff" stroke-width="0.08" textLength="14.9" lengthAdjust="spacingAndGlyphs" >Root</text>
<rect x="164.5" y="142.5" width="6" height="6" rx="1" fill="#fff" stroke="#bdbdbd" stroke-width="1" shape-rendering="geometricPrecision"/>
<rect x="166" y="145" width="3" height="1" fill="#444" />
<rect x="167" y="139.7" width="1" height="2.8" fill="#d8d8d8" />
<rect x="171" y="145" width="3" height="1" fill="#d8d8d8" />
<text x="175" y="148.6" font-size="8.0" fill="#111" stroke="#111" stroke-width="0.06" textLength="130.5" lengthAdjust="spacingAndGlyphs" >WLBP - Ddriag Redevelopment (Merlin)</text>
<rect x="180" y="150" width="1" height="84.5" fill="#d0d0d0" />
<rect x="181" y="157" width="6" height="1" fill="#d0d0d0" />
<text x="188.5" y="159.7" font-size="8.0" fill="#111" stroke="#111" stroke-width="0.06" textLength="86.47" lengthAdjust="spacingAndGlyphs" >Documentation - Technical</text>
<rect x="181" y="168" width="6" height="1" fill="#d0d0d0" />
<text x="188.5" y="170.7" font-size="8.0" fill="#111" stroke="#111" stroke-width="0.06" textLength="58.0" lengthAdjust="spacingAndGlyphs" >Coding - Program</text>
<rect x="181" y="179" width="6" height="1" fill="#d0d0d0" />
<text x="188.5" y="181.7" font-size="8.0" fill="#111" stroke="#111" stroke-width="0.06" textLength="59.93" lengthAdjust="spacingAndGlyphs" >Integration Testing</text>
<rect x="181" y="190" width="6" height="1" fill="#d0d0d0" />
<text x="188.5" y="192.7" font-size="8.0" fill="#111" stroke="#111" stroke-width="0.06" textLength="39.22" lengthAdjust="spacingAndGlyphs" >Deployment</text>
<rect x="181" y="201" width="6" height="1" fill="#d0d0d0" />
<text x="188.5" y="203.7" font-size="8.0" fill="#111" stroke="#111" stroke-width="0.06" textLength="67.81" lengthAdjust="spacingAndGlyphs" >Project Management</text>
<rect x="181" y="212" width="6" height="1" fill="#d0d0d0" />
<text x="188.5" y="214.7" font-size="8.0" fill="#111" stroke="#111" stroke-width="0.06" textLength="61.28" lengthAdjust="spacingAndGlyphs" >Coding - Database</text>
<rect x="181" y="223" width="6" height="1" fill="#d0d0d0" />
<text x="188.5" y="225.7" font-size="8.0" fill="#111" stroke="#111" stroke-width="0.06" textLength="48.2" lengthAdjust="spacingAndGlyphs" >Project - Client</text>
<rect x="181" y="234" width="6" height="1" fill="#d0d0d0" />
<text x="188.5" y="236.7" font-size="8.0" fill="#111" stroke="#111" stroke-width="0.06" textLength="26.15" lengthAdjust="spacingAndGlyphs" >Meeting</text>
<text x="332.6" y="143.7" font-size="7.8" fill="#111" textLength="14.4" lengthAdjust="spacingAndGlyphs" >Root</text>
<rect x="559" y="155.6" width="113" height="296" fill="#fdfaf3" />
<path d="M387.55 150.0 L387.55 150.0 L388.92 157.3 L386.18 157.3Z" fill="url(#gs0)" shape-rendering="geometricPrecision"/>
<path d="M386.18 156.8 L388.92 156.8" stroke="#000" stroke-opacity="0.35" stroke-width="1" shape-rendering="geometricPrecision"/>
<path d="M386.18 157.3 L388.92 157.3 L391.95 173.5 L383.15 173.5Z" fill="url(#gs1)" shape-rendering="geometricPrecision"/>
<path d="M383.15 173.0 L391.95 173.0" stroke="#000" stroke-opacity="0.35" stroke-width="1" shape-rendering="geometricPrecision"/>
<path d="M383.15 173.5 L391.95 173.5 L395.04 190.0 L380.06 190.0Z" fill="url(#gs2)" shape-rendering="geometricPrecision"/>
<path d="M380.06 189.5 L395.04 189.5" stroke="#000" stroke-opacity="0.35" stroke-width="1" shape-rendering="geometricPrecision"/>
<path d="M380.06 190.0 L395.04 190.0 L398.41 208.0 L376.69 208.0Z" fill="url(#gs3)" shape-rendering="geometricPrecision"/>
<path d="M376.69 207.5 L398.41 207.5" stroke="#000" stroke-opacity="0.35" stroke-width="1" shape-rendering="geometricPrecision"/>
<path d="M376.69 208.0 L398.41 208.0 L402.19 228.2 L372.91 228.2Z" fill="url(#gs4)" shape-rendering="geometricPrecision"/>
<path d="M372.91 227.7 L402.19 227.7" stroke="#000" stroke-opacity="0.35" stroke-width="1" shape-rendering="geometricPrecision"/>
<path d="M372.91 228.2 L402.19 228.2 L406.76 252.6 L368.34 252.6Z" fill="url(#gs5)" shape-rendering="geometricPrecision"/>
<path d="M368.34 252.1 L406.76 252.1" stroke="#000" stroke-opacity="0.35" stroke-width="1" shape-rendering="geometricPrecision"/>
<path d="M368.34 252.6 L406.76 252.6 L417.62 310.6 L357.48 310.6Z" fill="url(#gs6)" shape-rendering="geometricPrecision"/>
<path d="M357.48 310.1 L417.62 310.1" stroke="#000" stroke-opacity="0.35" stroke-width="1" shape-rendering="geometricPrecision"/>
<path d="M357.48 310.6 L417.62 310.6 L444.80 455.8 L330.30 455.8Z" fill="url(#gs7)" shape-rendering="geometricPrecision"/>
<defs><linearGradient id="gs0" gradientUnits="userSpaceOnUse" x1="386.18333878351865" y1="150.0" x2="388.9166612164814" y2="157.3"><stop offset="0" stop-color="#8fb050"/><stop offset="1" stop-color="#4a6a18"/></linearGradient><linearGradient id="gs1" gradientUnits="userSpaceOnUse" x1="383.1504741661217" y1="157.3" x2="391.94952583387834" y2="173.5"><stop offset="0" stop-color="#f06a5a"/><stop offset="1" stop-color="#b01a10"/></linearGradient><linearGradient id="gs2" gradientUnits="userSpaceOnUse" x1="380.0614453891432" y1="173.5" x2="395.0385546108568" y2="190.0"><stop offset="0" stop-color="#b898b8"/><stop offset="1" stop-color="#3a1038"/></linearGradient><linearGradient id="gs3" gradientUnits="userSpaceOnUse" x1="376.6915958142577" y1="190.0" x2="398.4084041857423" y2="208.0"><stop offset="0" stop-color="#f4b070"/><stop offset="1" stop-color="#b45a18"/></linearGradient><linearGradient id="gs4" gradientUnits="userSpaceOnUse" x1="372.909875735775" y1="208.0" x2="402.190124264225" y2="228.2"><stop offset="0" stop-color="#d0a8d0"/><stop offset="1" stop-color="#5a2858"/></linearGradient><linearGradient id="gs5" gradientUnits="userSpaceOnUse" x1="368.3418574231524" y1="228.2" x2="406.7581425768476" y2="252.6"><stop offset="0" stop-color="#6ae06a"/><stop offset="1" stop-color="#0a8a0a"/></linearGradient><linearGradient id="gs6" gradientUnits="userSpaceOnUse" x1="357.48345323741006" y1="252.6" x2="417.61654676258996" y2="310.6"><stop offset="0" stop-color="#8080f0"/><stop offset="1" stop-color="#0a0a9a"/></linearGradient><linearGradient id="gs7" gradientUnits="userSpaceOnUse" x1="330.3" y1="310.6" x2="444.8" y2="455.8"><stop offset="0" stop-color="#6464d8"/><stop offset="1" stop-color="#00009a"/></linearGradient></defs>
<path d="M387.98 155.5 L446 156.5" stroke="#80a040" stroke-width="1" shape-rendering="geometricPrecision"/>
<text x="446.6" y="159.1" font-size="7.8" fill="#111" stroke="#111" stroke-width="0.1" textLength="75.4" lengthAdjust="spacingAndGlyphs" >Coding - Database: 2%</text>
<path d="M389.85 165.5 L446 165.5" stroke="#e84030" stroke-width="1" shape-rendering="geometricPrecision"/>
<text x="446.6" y="168.4" font-size="7.8" fill="#111" stroke="#111" stroke-width="0.1" textLength="81.2" lengthAdjust="spacingAndGlyphs" >Project Management: 5%</text>
<path d="M393.03 182.5 L446 181.5" stroke="#f0b8f0" stroke-width="1" shape-rendering="geometricPrecision"/>
<text x="446.6" y="184.6" font-size="7.8" fill="#111" stroke="#111" stroke-width="0.1" textLength="73.6" lengthAdjust="spacingAndGlyphs" >Integration Testing: 5%</text>
<path d="M396.03 198.5 L446 198.5" stroke="#f8b878" stroke-width="1" shape-rendering="geometricPrecision"/>
<text x="446.6" y="201.7" font-size="7.8" fill="#111" stroke="#111" stroke-width="0.1" textLength="52.5" lengthAdjust="spacingAndGlyphs" >Deployment: 6%</text>
<path d="M399.77 218.5 L446 216.5" stroke="#e090e0" stroke-width="1" shape-rendering="geometricPrecision"/>
<text x="446.6" y="220.0" font-size="7.8" fill="#111" stroke="#111" stroke-width="0.1" textLength="60.3" lengthAdjust="spacingAndGlyphs" >Project - Client: 7%</text>
<path d="M403.89 240.5 L446 240.5" stroke="#40c040" stroke-width="1" shape-rendering="geometricPrecision"/>
<text x="446.6" y="243.5" font-size="7.8" fill="#111" stroke="#111" stroke-width="0.1" textLength="98.6" lengthAdjust="spacingAndGlyphs" >Documentation - Technical: 8%</text>
<path d="M411.76 282.5 L447 281.5" stroke="#6a6af0" stroke-width="1" shape-rendering="geometricPrecision"/>
<text x="446.6" y="284.6" font-size="7.8" fill="#111" stroke="#111" stroke-width="0.1" textLength="43.9" lengthAdjust="spacingAndGlyphs" >Meeting: 19%</text>
<path d="M430.66 383.5 L446 383.5" stroke="#6060e0" stroke-width="1" shape-rendering="geometricPrecision"/>
<text x="446.6" y="386.5" font-size="7.8" fill="#111" stroke="#111" stroke-width="0.1" textLength="74.5" lengthAdjust="spacingAndGlyphs" >Coding - Program: 48%</text>
<linearGradient id="lg0" x1="0" y1="0" x2="1" y2="1"><stop offset="0" stop-color="#6ae06a"/><stop offset="1" stop-color="#0a8a0a"/></linearGradient>
<rect x="562.5" y="159.7" width="9" height="9" fill="url(#lg0)" stroke="#555" stroke-width="0.6" shape-rendering="geometricPrecision"/>
<text x="572.9" y="166.7" font-size="7.8" fill="#111" stroke="#111" stroke-width="0.1" textLength="84.24" lengthAdjust="spacingAndGlyphs" >Documentation - Technical</text>
<linearGradient id="lg1" x1="0" y1="0" x2="1" y2="1"><stop offset="0" stop-color="#6464d8"/><stop offset="1" stop-color="#00009a"/></linearGradient>
<rect x="562.5" y="172.9" width="9" height="9" fill="url(#lg1)" stroke="#555" stroke-width="0.6" shape-rendering="geometricPrecision"/>
<text x="572.9" y="179.9" font-size="7.8" fill="#111" stroke="#111" stroke-width="0.1" textLength="56.5" lengthAdjust="spacingAndGlyphs" >Coding - Program</text>
<linearGradient id="lg2" x1="0" y1="0" x2="1" y2="1"><stop offset="0" stop-color="#b898b8"/><stop offset="1" stop-color="#3a1038"/></linearGradient>
<rect x="562.5" y="186.1" width="9" height="9" fill="url(#lg2)" stroke="#555" stroke-width="0.6" shape-rendering="geometricPrecision"/>
<text x="572.9" y="193.1" font-size="7.8" fill="#111" stroke="#111" stroke-width="0.1" textLength="58.38" lengthAdjust="spacingAndGlyphs" >Integration Testing</text>
<linearGradient id="lg3" x1="0" y1="0" x2="1" y2="1"><stop offset="0" stop-color="#f4b070"/><stop offset="1" stop-color="#b45a18"/></linearGradient>
<rect x="562.5" y="199.3" width="9" height="9" fill="url(#lg3)" stroke="#555" stroke-width="0.6" shape-rendering="geometricPrecision"/>
<text x="572.9" y="206.3" font-size="7.8" fill="#111" stroke="#111" stroke-width="0.1" textLength="38.2" lengthAdjust="spacingAndGlyphs" >Deployment</text>
<linearGradient id="lg4" x1="0" y1="0" x2="1" y2="1"><stop offset="0" stop-color="#f06a5a"/><stop offset="1" stop-color="#b01a10"/></linearGradient>
<rect x="562.5" y="212.5" width="9" height="9" fill="url(#lg4)" stroke="#555" stroke-width="0.6" shape-rendering="geometricPrecision"/>
<text x="572.9" y="219.5" font-size="7.8" fill="#111" stroke="#111" stroke-width="0.1" textLength="66.06" lengthAdjust="spacingAndGlyphs" >Project Management</text>
<linearGradient id="lg5" x1="0" y1="0" x2="1" y2="1"><stop offset="0" stop-color="#8fb050"/><stop offset="1" stop-color="#4a6a18"/></linearGradient>
<rect x="562.5" y="225.7" width="9" height="9" fill="url(#lg5)" stroke="#555" stroke-width="0.6" shape-rendering="geometricPrecision"/>
<text x="572.9" y="232.7" font-size="7.8" fill="#111" stroke="#111" stroke-width="0.1" textLength="59.7" lengthAdjust="spacingAndGlyphs" >Coding - Database</text>
<linearGradient id="lg6" x1="0" y1="0" x2="1" y2="1"><stop offset="0" stop-color="#d0a8d0"/><stop offset="1" stop-color="#5a2858"/></linearGradient>
<rect x="562.5" y="238.9" width="9" height="9" fill="url(#lg6)" stroke="#555" stroke-width="0.6" shape-rendering="geometricPrecision"/>
<text x="572.9" y="245.9" font-size="7.8" fill="#111" stroke="#111" stroke-width="0.1" textLength="46.95" lengthAdjust="spacingAndGlyphs" >Project - Client</text>
<linearGradient id="lg7" x1="0" y1="0" x2="1" y2="1"><stop offset="0" stop-color="#8080f0"/><stop offset="1" stop-color="#0a0a9a"/></linearGradient>
<rect x="562.5" y="252.1" width="9" height="9" fill="url(#lg7)" stroke="#555" stroke-width="0.6" shape-rendering="geometricPrecision"/>
<text x="572.9" y="259.1" font-size="7.8" fill="#111" stroke="#111" stroke-width="0.1" textLength="25.47" lengthAdjust="spacingAndGlyphs" >Meeting</text>
<rect x="8" y="467" width="679" height="16" fill="#ffffff" />
<rect x="8" y="468.5" width="34.5" height="14" fill="url(#gStat)"/>
<rect x="8.5" y="469" width="33.5" height="13.5" fill="none" stroke="#e4e4e4" stroke-width="1"/>
<text x="9.9" y="478.5" font-size="8.0" fill="#111" stroke="#111" stroke-width="0.1" textLength="29.5" lengthAdjust="spacingAndGlyphs" >localhost</text>
<rect x="45.3" y="468.5" width="41.400000000000006" height="14" fill="url(#gStat)"/>
<rect x="45.8" y="469" width="40.400000000000006" height="13.5" fill="none" stroke="#e4e4e4" stroke-width="1"/>
<text x="47.199999999999996" y="478.5" font-size="8.0" fill="#111" stroke="#111" stroke-width="0.1" textLength="36.5" lengthAdjust="spacingAndGlyphs" >quartz_live</text>
<rect x="88.5" y="468.5" width="16.0" height="14" fill="url(#gStat)"/>
<rect x="89.0" y="469" width="15.0" height="13.5" fill="none" stroke="#e4e4e4" stroke-width="1"/>
<text x="90.4" y="478.5" font-size="8.0" fill="#111" stroke="#111" stroke-width="0.1" textLength="10.8" lengthAdjust="spacingAndGlyphs" >aim</text>
<rect x="106.7" y="468.5" width="570.0" height="14" fill="url(#gStat)"/>
<rect x="107.2" y="469" width="569.0" height="13.5" fill="none" stroke="#e4e4e4" stroke-width="1"/>
<text x="108.60000000000001" y="478.5" font-size="8.0" fill="#111" stroke="#111" stroke-width="0.1" textLength="143.3" lengthAdjust="spacingAndGlyphs" >82 Matching entrie(s) were found (0 Secs)</text>
<path d="M680.0 483 L686 477.0" stroke="#555" stroke-width="1" shape-rendering="geometricPrecision"/>
<path d="M682.5 483 L686 479.5" stroke="#555" stroke-width="1" shape-rendering="geometricPrecision"/>
<path d="M685.0 483 L686 482.0" stroke="#555" stroke-width="1" shape-rendering="geometricPrecision"/>
</svg></body></html>
